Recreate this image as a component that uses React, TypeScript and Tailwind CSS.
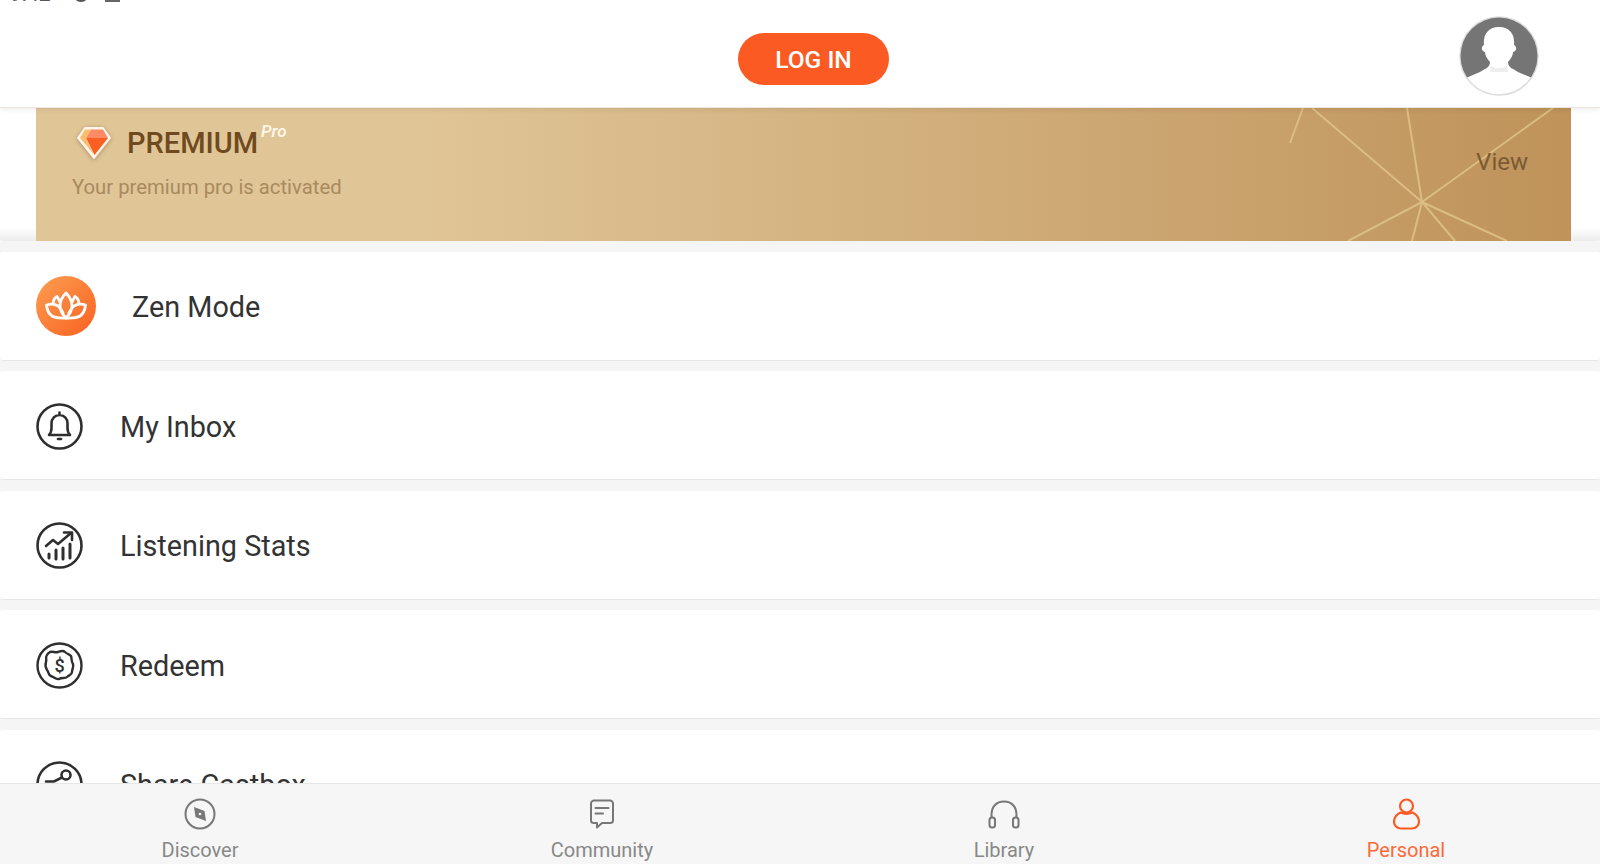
const roboto = "font-['Roboto',sans-serif]";

function Diamond() {
  return (
    <svg width="36" height="34" viewBox="0 0 36 34" className="drop-shadow-[0_1px_2px_rgba(90,60,20,0.4)]">
      <path d="M9 2H27L34 12L18 32L2 12Z" fill="#fff5ea" stroke="#fff5ea" strokeWidth="2" strokeLinejoin="round" />
      <path d="M9 3.500H15L10 12H4Z" fill="#fbbd6e" />
      <path d="M15 3.500H27L32 12H10Z" fill="#ff8a65" />
      <path d="M10 12H32L18.500 29Z" fill="#fb5f22" />
      <path d="M4 12H10L18.500 29Z" fill="#fbbd6e" />
    </svg>
  );
}

function Avatar() {
  return (
    <svg width="80" height="80" viewBox="0 0 80 80">
      <defs>
        <clipPath id="avatar-clip">
          <circle cx="40" cy="40" r="38.500" />
        </clipPath>
      </defs>
      <circle cx="40" cy="40" r="39" fill="#fff" stroke="#dcdcdc" strokeWidth="1.500" />
      <g clipPath="url(#avatar-clip)">
        <path d="M0 0H80V65L59 56C55 53 49 52 49 46C52 43 54 39 54 36C58 35 58 30 55 29C56 20 52 11 40 11C28 11 24 20 25 29C22 30 22 35 26 36C26 39 28 43 31 46C31 52 25 53 21 56L0 65Z" fill="#757575" />
        <path d="M32 50C36 53 44 53 48 50L49 56H31Z" fill="#eeeeee" />
      </g>
    </svg>
  );
}

function Lotus() {
  return (
    <svg width="42" height="30" viewBox="0 0 42 30" fill="none" stroke="#fff" strokeWidth="2.800" strokeLinejoin="round" strokeLinecap="round">
      <path d="M21 2C25 6 27 10 27 15C27 20 24 24 21 27C18 24 15 20 15 15C15 10 17 6 21 2Z" />
      <path d="M15 11C14 9 13 7 12 5.500C10 6.500 8.500 9 8 12" />
      <path d="M27 11C28 9 29 7 30 5.500C32 6.500 33.500 9 34 12" />
      <path d="M21 27C15 27 11 27.500 7 25C4 23 2 19 1.500 14C6 12.500 10 13 13 15C15 16.500 17 19 18 22" />
      <path d="M21 27C27 27 31 27.500 35 25C38 23 40 19 40.500 14C36 12.500 32 13 29 15C27 16.500 25 19 24 22" />
    </svg>
  );
}

function Bell() {
  return (
    <svg width="47" height="47" viewBox="0 0 47 47" fill="none" stroke="#2f2f2f" strokeWidth="2.600" strokeLinejoin="round" strokeLinecap="round">
      <circle cx="23.500" cy="23.500" r="22" />
      <path d="M23.500 9.500V12M13 32C15 30 15.500 28 15.500 25V20.500C15.500 15.500 19 12 23.500 12C28 12 31.500 15.500 31.500 20.500V25C31.500 28 32 30 34 32Z" />
      <path d="M22 36H25" />
    </svg>
  );
}

function Stats() {
  return (
    <svg width="47" height="47" viewBox="0 0 47 47" fill="none" stroke="#2f2f2f" strokeWidth="2.600" strokeLinejoin="round" strokeLinecap="round">
      <circle cx="23.500" cy="23.500" r="22" />
      <path d="M10 24L17 18L22 22L35 11" />
      <path d="M28 10.500H36V18" />
      <path d="M13 32V36M20 28V37M27 26V37M34 22V36" strokeWidth="3" />
    </svg>
  );
}

function Redeem() {
  return (
    <svg width="47" height="47" viewBox="0 0 47 47" fill="none" stroke="#2f2f2f" strokeWidth="2.400" strokeLinejoin="round">
      <circle cx="23.500" cy="23.500" r="22" />
      <path d="M14 10C17 9 19 11 22 10C25 9 27 8 29 10C31 12 33 12 35 14C36 17 35 19 37 22C38 25 36 27 36 30C36 33 33 33 31 35C29 37 26 35 23 37C20 38 18 35 15 34C12 33 13 30 11 28C9 25 9 23 10 20C11 17 9 15 11 13C12 11 13 11 14 10Z" />
      <text x="23.500" y="30" textAnchor="middle" fontFamily="Roboto, sans-serif" fontSize="18" fontWeight="500" fill="#2f2f2f" stroke="none">$</text>
    </svg>
  );
}

function Share() {
  return (
    <svg width="47" height="47" viewBox="0 0 47 47" fill="none" stroke="#2f2f2f" strokeWidth="2.600" strokeLinecap="round">
      <circle cx="23.500" cy="23.500" r="22" />
      <circle cx="30" cy="14" r="4.500" />
      <path d="M26 16.500L18 20.500H10" />
    </svg>
  );
}

function Compass() {
  return (
    <svg width="32" height="32" viewBox="0 0 32 32" fill="none" stroke="#777" strokeWidth="2">
      <circle cx="16" cy="16" r="14.500" />
      <path d="M10 9L20.500 13L22 23L11.500 19Z" fill="#777" stroke="none" />
      <circle cx="16" cy="16" r="1.300" fill="#f6f6f6" stroke="none" />
    </svg>
  );
}

function Chat() {
  return (
    <svg width="24" height="30" viewBox="0 0 24 30" fill="none" stroke="#777" strokeWidth="2" strokeLinejoin="round" strokeLinecap="round">
      <path d="M4 1.500H20C21.500 1.500 23 3 23 4.500V21.500C23 23 21.500 24 20 24H12L7 28.500V24H4C2.500 24 1 23 1 21.500V4.500C1 3 2.500 1.500 4 1.500Z" />
      <path d="M5.500 9H18.500M5.500 14.500H13" />
    </svg>
  );
}

function Headphones() {
  return (
    <svg width="32" height="29" viewBox="0 0 32 29" fill="none" stroke="#777" strokeWidth="2" strokeLinejoin="round">
      <path d="M3.500 18V15C3.500 7 8 1.500 16 1.500C24 1.500 28.500 7 28.500 15V18" />
      <rect x="1.500" y="17.500" width="5.500" height="10" rx="2.500" />
      <rect x="25" y="17.500" width="5.500" height="10" rx="2.500" />
    </svg>
  );
}

function Person() {
  return (
    <svg width="27" height="32" viewBox="0 0 27 32" fill="none" stroke="#fb5a23" strokeWidth="2.200" strokeLinejoin="round">
      <circle cx="13.500" cy="8" r="6.500" />
      <path d="M7.500 14.500C3.500 16.500 1 19.500 1 23.500C1 27.500 4 30.500 8 30.500H19C23 30.500 26 27.500 26 23.500C26 19.500 23.500 16.500 19.500 14.500C16 16 11 16 7.500 14.500Z" />
    </svg>
  );
}

function MenuRow({
  icon,
  label,
  rowClass = "gap-[37px] pt-[2px]",
  textClass = "pt-[3px]",
}: {
  icon: React.ReactNode;
  label: string;
  rowClass?: string;
  textClass?: string;
}) {
  return (
    <div className={`flex h-[109px] shrink-0 items-center rounded-[3px] border-b border-[#e6e6e6] bg-white pl-9 ${rowClass}`}>
      {icon}
      <span className={`text-[28.800px] text-[#333] ${textClass}`}>{label}</span>
    </div>
  );
}

function Tab({ icon, label, active }: { icon: React.ReactNode; label: string; active?: boolean }) {
  return (
    <div className="flex flex-col items-center">
      <div className="flex h-[34px] items-center">{icon}</div>
      <span className={`mt-[7px] text-[20px] leading-6 ${active ? "text-[#fb6a38]" : "text-[#888]"}`}>{label}</span>
    </div>
  );
}

export default function App() {
  return (
    <div className={`flex h-[864px] w-full flex-col overflow-hidden bg-[#f5f5f5] ${roboto}`}>
      <header className="relative z-10 h-[108px] shrink-0 border-b border-[#ece8e0] bg-white shadow-[0_2px_5px_rgba(0,0,0,0.07)]">
        {/* status bar is cut off by the top of the screen */}
        <div className="-mt-[15px] flex h-[18px] items-center pl-[10px] text-[#555]">
          <span className="text-[21px] leading-[18px]">9:42</span>
          <span className="ml-[22px] h-[16px] w-[16px] rounded-full bg-[#555]" />
          <span className="ml-4 h-[15px] w-[15px] border-2 border-[#666]" />
        </div>
        <div className="relative -mt-[3px] flex justify-center pl-[27px] pt-[33px]">
          <button className="flex h-[52px] w-[151px] items-center justify-center rounded-full bg-[#fb5a23] pt-[3px] text-[24.500px] font-medium text-white">
            LOG IN
          </button>
          <div className="absolute right-[61px] top-4">
            <Avatar />
          </div>
        </div>
      </header>

      <main className="flex min-h-0 flex-1 flex-col gap-[10.500px] overflow-hidden">
        <section className="h-[133px] shrink-0 rounded-b-[3px] bg-gradient-to-b from-white from-[90%] to-[#ececec] pl-9 pr-[29px]">
          <div className="relative flex h-full items-center justify-between bg-gradient-to-r from-[#e0c597] from-25% to-[#bf935a] pl-9 pr-[43px]">
            <svg className="absolute inset-0 h-full w-full" viewBox="0 0 1535 133" preserveAspectRatio="none" fill="none" stroke="#e3c88f" strokeWidth="2" strokeOpacity="0.75">
              <path d="M1386 94L1276 0M1386 94L1371 0M1386 94L1517 0M1386 94L1312 133M1386 94L1376 133M1386 94L1419 133M1386 94L1471 133M1254 35L1267 0" />
            </svg>
            <div className="relative -mt-[25px]">
              <div className="flex items-center gap-[15px] pl-1">
                <Diamond />
                <span className="relative text-[29px] font-medium leading-9 text-[#6f4a20]">
                  PREMIUM
                  <span className="absolute -top-[4px] left-[134px] text-[17px] font-semibold italic leading-5 text-[#fff6e6]">Pro</span>
                </span>
              </div>
              <p className="mt-[14px] text-[20.300px] leading-6 text-[#a98a5f]">Your premium pro is activated</p>
            </div>
            <span className="relative -mt-[26px] text-[24px] text-[#7b5a33]">View</span>
          </div>
        </section>

        <MenuRow
          rowClass="gap-9"
          textClass="pt-[5px]"
          label="Zen Mode"
          icon={
            <div className="flex h-[60px] w-[60px] items-center justify-center rounded-full bg-gradient-to-br from-[#fb9d50] to-[#f95f1e]">
              <Lotus />
            </div>
          }
        />
        <MenuRow label="My Inbox" icon={<Bell />} />
        <MenuRow label="Listening Stats" icon={<Stats />} />
        <MenuRow label="Redeem" icon={<Redeem />} />
        <MenuRow label="Share Castbox" icon={<Share />} />
      </main>

      <footer className="grid h-[81px] shrink-0 grid-cols-[repeat(4,400px)] gap-x-[2px] border-t border-[#e6e6e6] bg-[#f6f6f6] pt-[13px]">
        <Tab icon={<Compass />} label="Discover" />
        <Tab icon={<Chat />} label="Community" />
        <Tab icon={<Headphones />} label="Library" />
        <Tab icon={<Person />} label="Personal" active />
      </footer>
    </div>
  );
}
